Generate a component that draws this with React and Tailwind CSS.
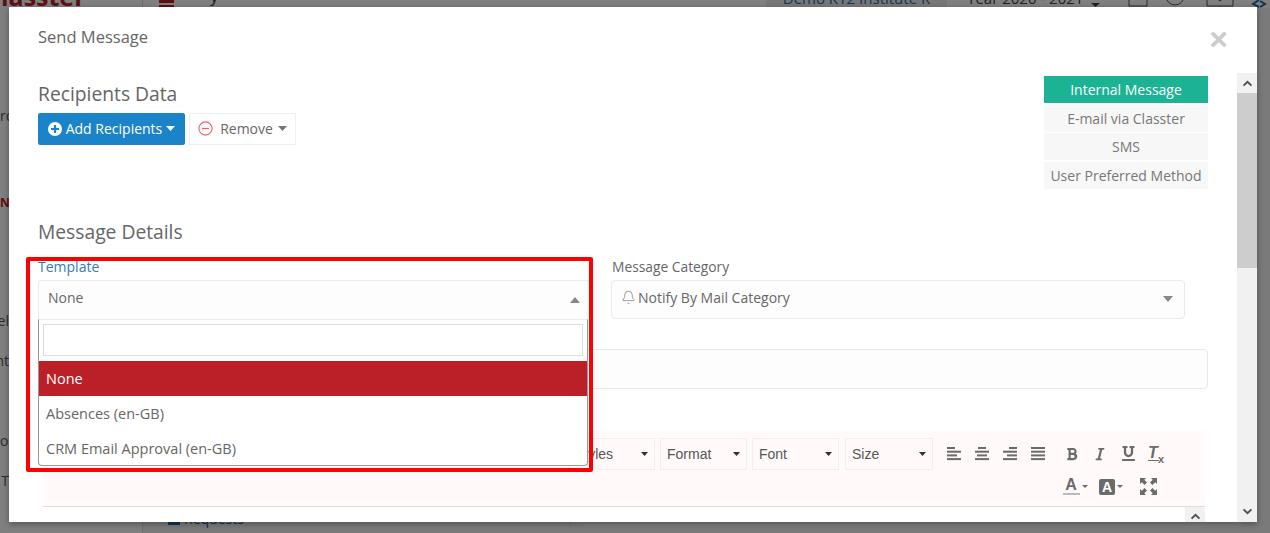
import React from 'react';
import { Bell } from 'lucide-react';
import { FaBold, FaItalic, FaUnderline } from 'react-icons/fa';

// --- small drawn icons ---
const Caret = ({ className }) => (
  <svg viewBox="0 0 10 6" preserveAspectRatio="none" className={className} fill="currentColor"><path d="M0 0h10L5 6z" /></svg>
);
const CaretUp = ({ className }) => (
  <svg viewBox="0 0 10 6" preserveAspectRatio="none" className={className} fill="currentColor"><path d="M0 6h10L5 0z" /></svg>
);
const Chevron = ({ up, className }) => (
  <svg viewBox="0 0 12 8" className={className} fill="none" stroke="currentColor" strokeWidth="2.2">
    <path d={up ? 'M1.5 6.5 6 2l4.5 4.5' : 'M1.5 1.5 6 6l4.5-4.5'} />
  </svg>
);
const PlusCircle = () => (
  <svg viewBox="0 0 14 14" className="h-[14px] w-[14px]">
    <circle cx="7" cy="7" r="7" fill="#fff" />
    <path d="M7 3v8M3 7h8" stroke="#1b83c8" strokeWidth="2.2" />
  </svg>
);
const MinusCircle = () => (
  <svg viewBox="0 0 15 15" className="h-[15px] w-[15px]" fill="none" stroke="#ef5f6f" strokeWidth="1.1">
    <circle cx="7.5" cy="7.5" r="6.6" />
    <path d="M4 7.5h7" strokeWidth="1.3" />
  </svg>
);
const AlignIcon = ({ rows }) => (
  <svg viewBox="0 0 14 14" className="h-[14px] w-[14px]" fill="#6b6b6b">
    {rows.map(([x, w], i) => <rect key={i} x={x} y={i * 3.7} width={w} height="2" />)}
  </svg>
);
const FullscreenIcon = () => (
  <svg viewBox="0 0 17 17" className="h-[17px] w-[17px]" fill="#6b6b6b">
    <path d="M0 0h6L4.3 1.8 7 4.5 4.5 7 1.8 4.3 0 6zM17 0v6l-1.8-1.7L12.5 7 10 4.5l2.7-2.7L11 0zM0 17v-6l1.8 1.7L4.5 10 7 12.5l-2.7 2.7L6 17zM17 17h-6l1.7-1.8L10 12.5l2.5-2.5 2.7 2.7L17 11z" />
  </svg>
);

const tabs = ['E-mail via Classter', 'SMS', 'User Preferred Method'];
const leftCrumbs = [
  ['ro', 'justify-start text-[#555]', 'mt-[97px]'],
  ['NT', 'justify-start text-[12px] text-[#bb2029] font-bold', 'mt-[66px]'],
  ['el', 'justify-end text-[#555]', 'mt-[97px]'],
  ['nt', 'justify-end text-[#555]', 'mt-[19px]'],
  ['ou', 'justify-start text-[#555]', 'mt-[59px]'],
  ['c T', 'justify-end text-[#555]', 'mt-[19px]'],
];

// page that sits behind the modal, only its edges are visible
const BackPage = () => (
  <div className="h-[533px] w-[1270px] overflow-hidden bg-white">
    <div className="flex h-[8px] overflow-hidden">
      <div className="h-[8px] w-[143px] shrink-0 overflow-hidden border-r border-[#ddd]">
        <div className="-mt-[17px] -ml-[15px] text-[25px] leading-[26px] font-bold text-[#bb2029]">Classter</div>
      </div>
      <div className="ml-[16px] flex h-[8px] w-[15px] shrink-0 flex-col gap-[2px]">
        <div className="h-[3px] bg-[#bb2029]" />
        <div className="h-[3px] bg-[#bb2029]" />
      </div>
      <div className="-mt-[14px] ml-[36px] w-[10px] text-[17px] leading-[20px] text-[#333]">y</div>
      <div className="ml-[546px] flex h-[8px] w-[181px] shrink-0 justify-center overflow-hidden bg-[#eee] text-[15px] leading-[20px] whitespace-nowrap text-[#1f6da8]">
        <span className="-mt-[12px]">Demo K12 Institute R</span>
      </div>
      <div className="ml-[20px] flex h-[8px] shrink-0 gap-[8px] overflow-hidden text-[15px] leading-[20px] whitespace-nowrap text-[#444]">
        <span className="-mt-[12px]">Year 2020 - 2021</span>
        <Caret className="mt-[3px] h-[4px] w-[9px]" />
      </div>
      <div className="ml-[28px] flex h-[8px] shrink-0 items-start overflow-hidden text-[#555]">
        <svg viewBox="0 0 20 22" className="-mt-[15px] h-[22px] w-[20px]" fill="none" stroke="currentColor"><path d="M1 1h18v20H1z" /></svg>
        <svg viewBox="0 0 20 22" className="-mt-[15px] ml-[17px] h-[22px] w-[20px]" fill="none" stroke="currentColor"><circle cx="10" cy="11" r="9" /></svg>
        <svg viewBox="0 0 30 22" className="-mt-[15px] ml-[21px] h-[22px] w-[30px]" fill="none" stroke="currentColor"><path d="M1 5h26v16H1zM1 5l13 11L27 5" /></svg>
        <svg viewBox="0 0 16 22" className="-mt-[14px] ml-[15px] h-[22px] w-[16px]" fill="none" stroke="#1f6da8" strokeWidth="2"><path d="M8 14l-6 4 6 3M9 15l5 3-5 3" /></svg>
      </div>
    </div>
    <div className="flex h-[525px]">
      <div className="flex w-[143px] shrink-0 flex-col border-r border-[#e2e2e2] text-[14px] leading-[21px]">
        <div className="w-[9px] overflow-hidden">
          {leftCrumbs.map(([t, c, m]) => (
            <div key={t} className={`flex h-[21px] whitespace-nowrap ${c} ${m}`}>{t}</div>
          ))}
        </div>
      </div>
      <div className="flex flex-1 bg-[#f5f5f5]">
        <div className="mt-[504px] ml-[25px] flex h-[14px] w-[403px] shrink-0 items-center gap-[4px] border-r border-[#e2e2e2] text-[14px] leading-[14px] text-[#1f6da8]">
          <span className="h-[12px] w-[12px] bg-[#1f6da8]" />
          Requests
        </div>
        <div className="ml-[11px] h-[519px] w-[662px] shrink-0 rounded-b-[6px] bg-white" />
      </div>
    </div>
  </div>
);

const ToolbarSelect = ({ label, className }) => (
  <div className={`flex h-[32px] items-center justify-between border border-[#f3eeed] px-[6px] pt-[1px] font-['Liberation_Sans',sans-serif] text-[14px] text-[#555] ${className}`}>
    {label}
    <Caret className="h-[4px] w-[7px] text-[#333]" />
  </div>
);

const TB = ({ children, className = 'w-[28px]' }) => (
  <div className={`flex h-[28px] items-center justify-center text-[#6b6b6b] ${className}`}>{children}</div>
);

const EditorToolbar = () => (
  <div className="mr-[32px] ml-[5px] h-[76px] border-b border-[#ddd] bg-[#fffaf9] pt-[7px]">
    <div className="flex items-center justify-end pr-[35px]">
      <ToolbarSelect label="Styles" className="mr-[5px] w-[87px]" />
      <ToolbarSelect label="Format" className="mr-[5px] w-[87px]" />
      <ToolbarSelect label="Font" className="mr-[6px] w-[87px]" />
      <ToolbarSelect label="Size" className="mr-[7px] w-[88px]" />
      <TB><AlignIcon rows={[[0, 8], [0, 14], [0, 10], [0, 14]]} /></TB>
      <TB><AlignIcon rows={[[3, 8], [0, 14], [2, 10], [0, 14]]} /></TB>
      <TB><AlignIcon rows={[[6, 8], [0, 14], [4, 10], [0, 14]]} /></TB>
      <TB><AlignIcon rows={[[0, 14], [0, 14], [0, 14], [0, 14]]} /></TB>
      <div className="w-[6px]" />
      <TB><FaBold className="h-[14px] w-[12px]" /></TB>
      <TB><FaItalic className="h-[14px] w-[10px]" /></TB>
      <TB><FaUnderline className="h-[15px] w-[13px]" /></TB>
      <TB>
        <span className="relative flex h-[16px] w-[16px]">
          <span className="font-['Liberation_Sans',sans-serif] text-[16px] leading-[14px] font-bold italic">T</span>
          <span className="absolute bottom-[1px] left-0 h-[1px] w-[11px] bg-[#6b6b6b]" />
          <span className="absolute right-0 bottom-[-3px] font-['Liberation_Sans',sans-serif] text-[11px] leading-[12px] font-bold">x</span>
        </span>
      </TB>
    </div>
    <div className="mt-[3px] flex items-center justify-end pr-[43px]">
      <TB className="w-[36px] gap-[2px]">
        <span className="flex w-[17px] flex-col items-center font-['Liberation_Sans',sans-serif] text-[16px] leading-[14px] font-bold">
          A
          <span className="mt-[1px] h-[2px] w-[17px] bg-[#bbb]" />
        </span>
        <Caret className="h-[3px] w-[6px]" />
      </TB>
      <TB className="w-[36px] gap-[2px]">
        <span className="flex h-[16px] w-[16px] items-center justify-center rounded-[2px] bg-[#6b6b6b] font-['Liberation_Sans',sans-serif] text-[14px] leading-[14px] font-bold text-white">A</span>
        <Caret className="h-[3px] w-[6px]" />
      </TB>
      <TB className="ml-[5px] w-[28px]"><FullscreenIcon /></TB>
    </div>
  </div>
);

const Scrollbar = () => (
  <div className="flex w-[20px] shrink-0 flex-col items-center bg-[#f1f1f1] text-[#505050]">
    <div className="flex h-[20px] items-center justify-center"><Chevron up className="h-[7px] w-[11px]" /></div>
    <div className="h-[175px] w-full bg-[#cdcdcd]" />
    <div className="mt-auto flex h-[20px] items-center justify-center pb-[1px]"><Chevron className="h-[7px] w-[11px]" /></div>
  </div>
);

const SendMessageModal = () => (
  <div className="absolute top-[7px] left-[9px] flex h-[515px] w-[1248px] flex-col overflow-hidden bg-white font-['Open_Sans',sans-serif] text-[#666] shadow-[0_2px_6px_rgba(0,0,0,0.35)]">
    {/* Header */}
    <div className="flex h-[66px] shrink-0 justify-between px-[29px] pt-[19px]">
      <h4 className="text-[16.5px] leading-[22px] font-medium text-[#666]">Send Message</h4>
      <span className="-mt-[3px] font-['Liberation_Sans',sans-serif] text-[32px] leading-[32px] font-bold text-[#ccc]">×</span>
    </div>

    <div className="flex min-h-0 flex-1">
      <div className="min-w-0 flex-1 pt-[3px]">
        {/* Recipients + delivery method */}
        <div className="flex justify-between px-[29px]">
          <div>
            <h3 className="mt-[6px] text-[19.25px] leading-[24px]">Recipients Data</h3>
            <div className="mt-[7px] flex gap-[4px]">
              <button className="flex h-[32px] w-[147px] items-center justify-center gap-[4px] rounded-[2px] bg-[#1b83c8] pb-[1px] text-[14px] text-white">
                <PlusCircle />
                Add Recipients
                <Caret className="h-[5px] w-[9px]" />
              </button>
              <button className="flex h-[32px] w-[107px] items-center justify-center gap-[7px] border border-[#eceff3] bg-white pb-[1px] text-[14px] text-[#666]">
                <MinusCircle />
                Remove
                <Caret className="-ml-[2px] h-[5px] w-[9px] text-[#777]" />
              </button>
            </div>
          </div>
          <div className="flex w-[164px] flex-col gap-[1.67px] text-[14px]">
            <div className="flex h-[27px] items-center justify-center bg-[#1bb394] text-white">Internal Message</div>
            {tabs.map((t) => (
              <div key={t} className="flex h-[27px] items-center justify-center bg-[#f7f7f7] text-[#777]">{t}</div>
            ))}
          </div>
        </div>

        {/* Message details */}
        <div className="pl-[29px]">
          <h3 className="mt-[31px] text-[19.25px] leading-[24px]">Message Details</h3>
          <div className="mt-[14px] flex">
            <div className="relative mr-[21px] w-[552px]">
              <label className="block text-[14px] leading-[18px] text-[#337ab7]">Template</label>
              <div className="mt-[4px] flex h-[39px] items-center justify-between rounded-t-[4px] border border-b-0 border-[#e8ecef] bg-[#fefdfd] px-[9px] pb-[4px] text-[14px] text-[#666]">
                None
                <CaretUp className="mt-[4px] h-[6px] w-[10px] text-[#888]" />
              </div>
              {/* open dropdown */}
              <div className="absolute top-[61px] left-0 z-10 h-[147px] w-[550px] rounded-b-[4px] border border-[#999] border-t-[#e8ecef] bg-white">
                <div className="px-[4px] pt-[4px]">
                  <div className="h-[32px] border border-[#ddd] bg-white" />
                </div>
                <div className="mt-[5px] flex h-[35px] items-center bg-[#bb2029] pl-[7px] text-[14.5px] text-white">None</div>
                <div className="flex h-[35px] items-center pl-[7px] text-[14.5px] text-[#666]">Absences (en-GB)</div>
                <div className="flex h-[35px] items-center pl-[7px] text-[14.5px] text-[#666]">CRM Email Approval (en-GB)</div>
              </div>
            </div>
            <div className="w-[574px]">
              <label className="block pl-[1px] text-[13.8px] leading-[18px] text-[#666]">Message Category</label>
              <div className="mt-[4px] flex h-[39px] items-center rounded-[4px] border border-[#e8ecef] bg-[#fefdfd] pr-[11px] pb-[3px] pl-[9px] text-[14px] text-[#666]">
                <Bell className="mr-[2px] h-[15px] w-[15px]" strokeWidth={1} />
                Notify By Mail Category
                <Caret className="mt-[3px] ml-auto h-[6px] w-[10px] text-[#888]" />
              </div>
            </div>
          </div>
          <div className="mt-[30px] mr-[29px] h-[40px] rounded-[4px] border border-[#e6e8ee] bg-[#fefdfd]" />
          <div className="mt-[42px]">
            <EditorToolbar />
            <div className="mr-[32px] ml-[5px] flex h-[20px] justify-end">
              <div className="flex w-[20px] justify-center rounded-tr-[4px] bg-[#f1f1f1] pt-[6px] text-[#505050]">
                <Chevron up className="h-[7px] w-[11px]" />
              </div>
            </div>
          </div>
        </div>
      </div>
      <Scrollbar />
    </div>
  </div>
);

export default function App() {
  return (
    <div className="relative h-[533px] w-[1270px] overflow-hidden font-['Open_Sans',sans-serif]">
      <BackPage />
      <div className="absolute inset-0 bg-black/50" />
      <SendMessageModal />
      {/* annotation drawn on the screenshot */}
      <div className="absolute top-[257px] left-[26px] z-20 h-[215px] w-[567px] rounded-[2px] border-[4px] border-[#ff0000]" />
    </div>
  );
}
